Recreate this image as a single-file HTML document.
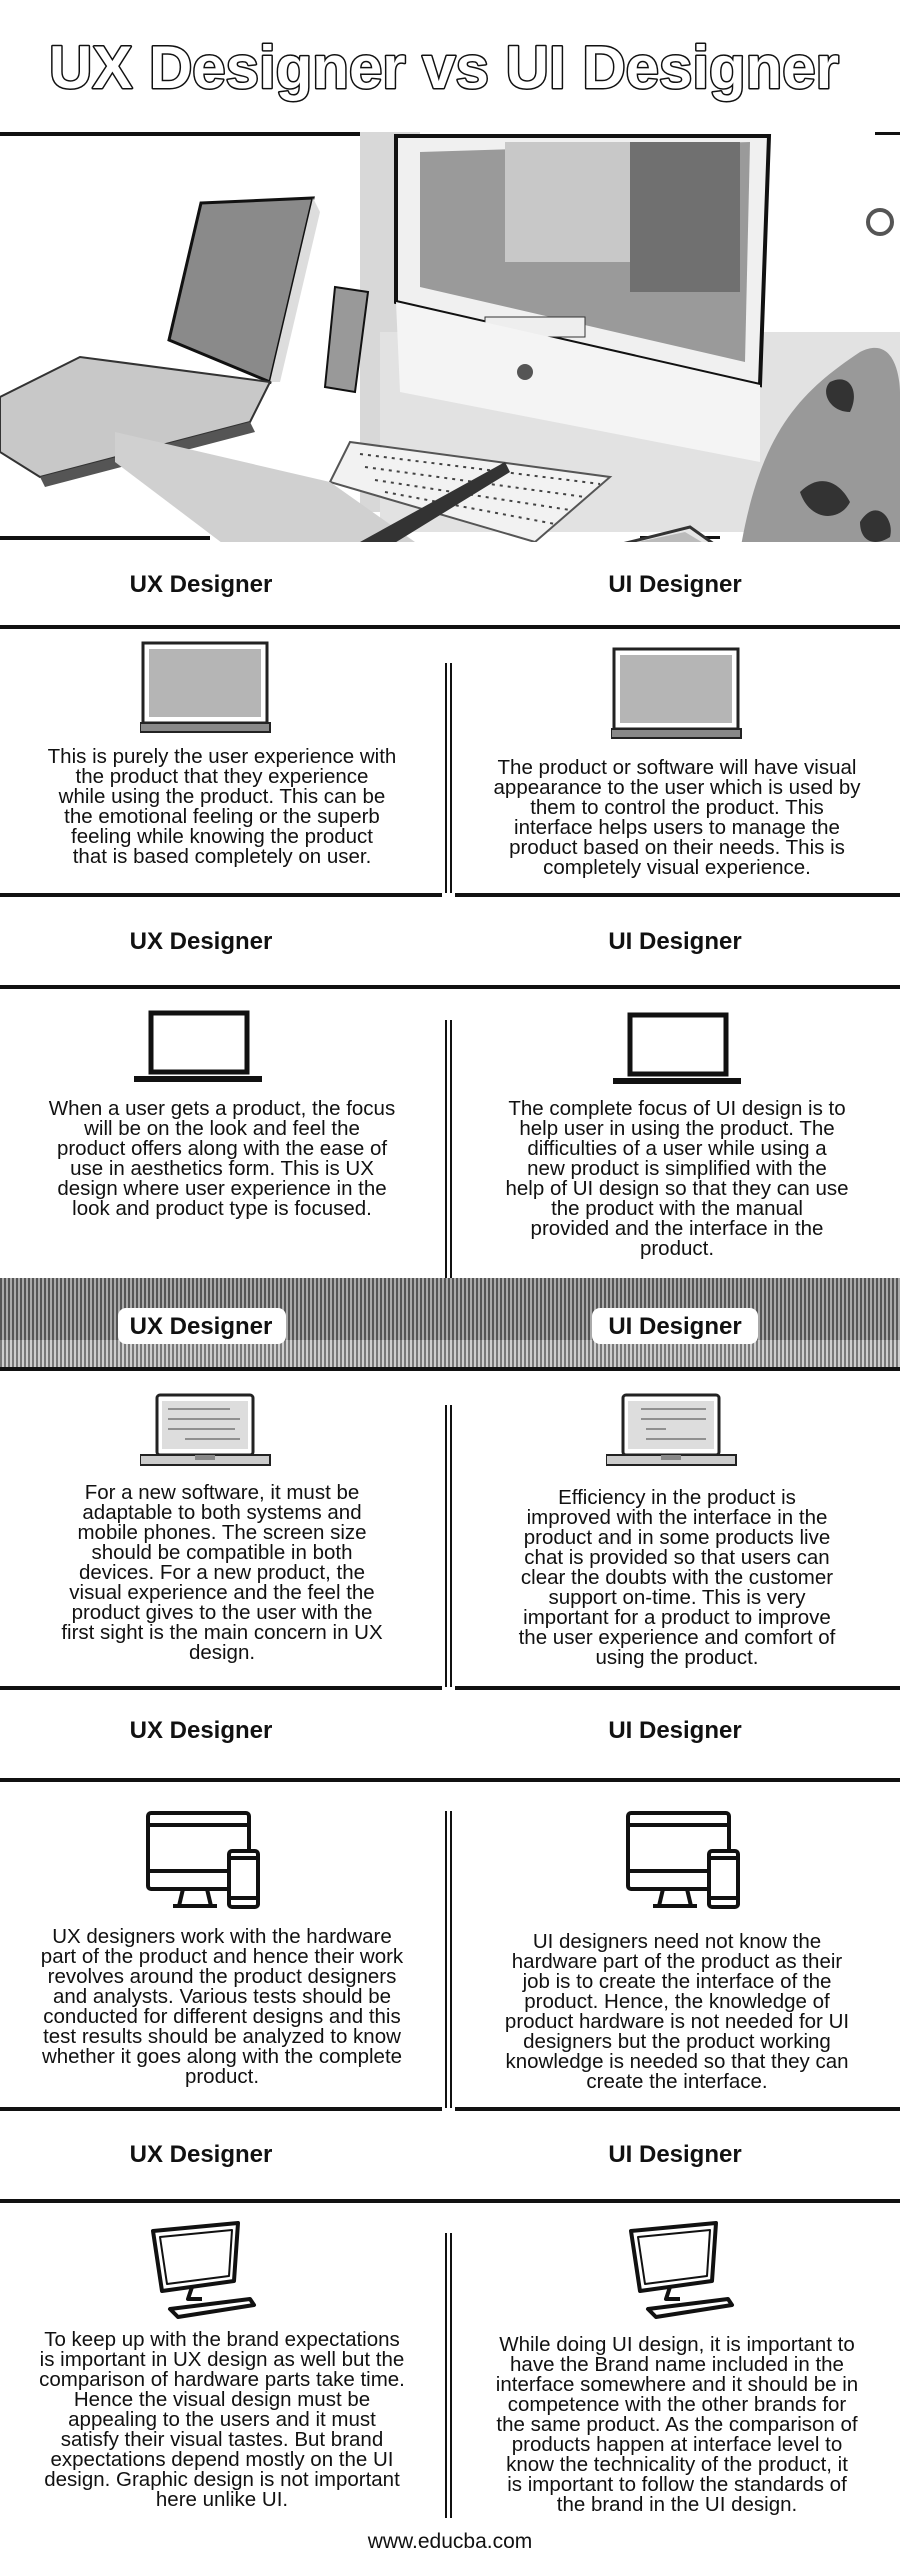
<!DOCTYPE html>
<html><head><meta charset="utf-8">
<style>
*{margin:0;padding:0;box-sizing:border-box}
body{width:900px;height:2566px;background:#fff;position:relative;overflow:hidden;font-family:"Liberation Sans",sans-serif;color:#111}
.a{position:absolute}
.hl{position:absolute;height:4px;background:#111}
.vd{position:absolute;width:7px;border-left:2px solid #111;border-right:2px solid #111}
.h{position:absolute;font-weight:bold;font-size:24px;line-height:30px;width:300px;text-align:center}
.t{position:absolute;font-size:20.5px;line-height:20px;text-align:center;white-space:nowrap}
.L{left:0;width:444px}
.R{left:454px;width:446px}
</style></head><body>

<svg class="a" style="left:0;top:30px" width="900" height="80">
<text x="49" y="58" textLength="790" lengthAdjust="spacingAndGlyphs" font-family="Liberation Sans" font-weight="bold" font-size="60" fill="#fff" stroke="#111" stroke-width="3" paint-order="stroke" stroke-linejoin="round">UX Designer vs UI Designer</text>
</svg>

<!-- photo -->
<svg class="a" style="left:0;top:132px" width="900" height="410">
<rect x="0" y="0" width="400" height="4" fill="#111"/>
<rect x="875" y="0" width="25" height="3" fill="#111"/>
<rect x="0" y="404" width="210" height="4" fill="#111"/>
<rect x="640" y="404" width="80" height="3" fill="#111"/>
<rect x="360" y="0" width="60" height="380" fill="#d8d8d8"/>
<rect x="380" y="200" width="520" height="200" fill="#e2e2e2"/>
<polygon points="396,4 769,4 760,253 396,170" fill="#f0f0f0" stroke="#111" stroke-width="4"/>
<polygon points="420,20 750,10 745,230 420,155" fill="#9a9a9a"/>
<rect x="505" y="10" width="130" height="120" fill="#c8c8c8"/>
<rect x="630" y="10" width="110" height="150" fill="#707070"/>
<rect x="485" y="185" width="100" height="20" fill="#eee" stroke="#333"/>
<polygon points="396,170 760,253 760,330 400,260" fill="#f4f4f4"/>
<circle cx="525" cy="240" r="8" fill="#555"/>
<polygon points="201,71 313,66 270,250 169,208" fill="#8a8a8a" stroke="#111" stroke-width="3"/>
<polygon points="313,66 320,80 280,250 270,250" fill="#ddd"/>
<polygon points="0,265 80,225 270,250 250,290 40,345 0,320" fill="#c8c8c8" stroke="#333" stroke-width="2"/>
<polygon points="40,345 250,290 255,300 45,355" fill="#555"/>
<polygon points="335,155 368,160 355,260 325,255" fill="#999" stroke="#111" stroke-width="2"/>
<polygon points="350,310 610,345 535,410 330,350" fill="#f2f2f2" stroke="#555" stroke-width="2"/>
<g stroke="#444" stroke-width="2" stroke-dasharray="3 5">
<line x1="360" y1="322" x2="600" y2="352"/><line x1="365" y1="335" x2="585" y2="365"/><line x1="375" y1="348" x2="570" y2="378"/><line x1="385" y1="360" x2="555" y2="392"/></g>
<polygon points="115,300 330,350 500,470 300,470 115,330" fill="#d0d0d0"/>
<polygon points="360,410 505,330 510,340 380,420" fill="#333"/>
<polygon points="590,420 690,395 725,420 640,450" fill="#e6e6e6" stroke="#333" stroke-width="3"/>
<polygon points="600,418 685,400 715,418 640,442" fill="#bbb"/>
<path d="M740,420 C760,300 800,260 860,220 C900,200 900,260 900,260 L900,410 L800,410 Z" fill="#999"/>
<path d="M800,360 c20,-20 40,-10 50,10 c-10,20 -40,20 -50,-10z M830,250 c20,-10 30,10 20,30 c-20,0 -30,-20 -20,-30z M860,390 c15,-25 35,-5 30,15 c-15,10 -30,5 -30,-15z" fill="#333"/>
<circle cx="880" cy="90" r="12" fill="none" stroke="#555" stroke-width="4"/>
</svg>

<!-- Section 1 -->
<div class="h" style="left:51px;top:570px">UX Designer</div>
<div class="h" style="left:525px;top:570px">UI Designer</div>
<div class="hl" style="left:0;width:900px;top:625px"></div>

<svg class="a" style="left:140px;top:641px" width="134" height="94">
<rect x="3" y="2" width="124" height="80" fill="#fff" stroke="#222" stroke-width="3"/>
<rect x="9" y="8" width="112" height="68" fill="#b5b5b5"/>
<rect x="0" y="82" width="130" height="9" fill="#888" stroke="#222" stroke-width="2"/>
</svg>
<svg class="a" style="left:611px;top:647px" width="134" height="94">
<rect x="3" y="2" width="124" height="80" fill="#fff" stroke="#222" stroke-width="3"/>
<rect x="9" y="8" width="112" height="68" fill="#b5b5b5"/>
<rect x="0" y="82" width="130" height="9" fill="#888" stroke="#222" stroke-width="2"/>
</svg>
<div class="vd" style="left:445px;top:663px;height:230px"></div>
<div class="t L" style="top:747px">This is purely the user experience with<br>the product that they experience<br>while using the product. This can be<br>the emotional feeling or the superb<br>feeling while knowing the product<br>that is based completely on user.</div>
<div class="t R" style="top:758px">The product or software will have visual<br>appearance to the user which is used by<br>them to control the product. This<br>interface helps users to manage the<br>product based on their needs. This is<br>completely visual experience.</div>
<div class="hl" style="left:0;width:442px;top:893px"></div>
<div class="hl" style="left:455px;width:445px;top:893px"></div>

<!-- Section 2 -->
<div class="h" style="left:51px;top:927px">UX Designer</div>
<div class="h" style="left:525px;top:927px">UI Designer</div>
<div class="hl" style="left:0;width:900px;top:985px"></div>
<svg class="a" style="left:134px;top:1010px" width="132" height="74">
<rect x="17" y="3" width="96" height="59" fill="none" stroke="#111" stroke-width="5"/>
<rect x="0" y="66" width="128" height="6" fill="#111"/>
</svg>
<svg class="a" style="left:613px;top:1012px" width="132" height="74">
<rect x="17" y="3" width="96" height="59" fill="none" stroke="#111" stroke-width="5"/>
<rect x="0" y="66" width="128" height="6" fill="#111"/>
</svg>
<div class="vd" style="left:445px;top:1020px;height:258px"></div>
<div class="t L" style="top:1099px">When a user gets a product, the focus<br>will be on the look and feel the<br>product offers along with the ease of<br>use in aesthetics form. This is UX<br>design where user experience in the<br>look and product type is focused.</div>
<div class="t R" style="top:1099px">The complete focus of UI design is to<br>help user in using the product. The<br>difficulties of a user while using a<br>new product is simplified with the<br>help of UI design so that they can use<br>the product with the manual<br>provided and the interface in the<br>product.</div>

<!-- Section 3 band -->
<div class="a" style="left:0;top:1278px;width:900px;height:90px;background:repeating-linear-gradient(90deg,#555 0 2px,#aaa 2px 4px)"></div>
<div class="a" style="left:0;top:1340px;width:900px;height:28px;background:repeating-linear-gradient(90deg,#888 0 2px,#ddd 2px 4px);opacity:.7"></div>
<div class="hl" style="left:0;width:900px;top:1367px"></div>
<div class="a" style="left:118px;top:1308px;width:168px;height:36px;background:#fff;border-radius:8px"></div>
<div class="a" style="left:592px;top:1308px;width:166px;height:36px;background:#fff;border-radius:8px"></div>
<div class="h" style="left:51px;top:1312px">UX Designer</div>
<div class="h" style="left:525px;top:1312px">UI Designer</div>

<svg class="a" style="left:140px;top:1393px" width="132" height="76">
<rect x="17" y="2" width="96" height="60" rx="3" fill="#fff" stroke="#222" stroke-width="3"/>
<rect x="22" y="8" width="86" height="48" fill="#ddd"/>
<g stroke="#777" stroke-width="1.5"><line x1="28" y1="16" x2="90" y2="16"/><line x1="28" y1="26" x2="100" y2="26"/><line x1="28" y1="36" x2="95" y2="36"/><line x1="45" y1="46" x2="100" y2="46"/></g>
<rect x="0" y="62" width="130" height="10" fill="#ccc" stroke="#222" stroke-width="2"/>
<rect x="55" y="62" width="20" height="5" fill="#888"/>
</svg>
<svg class="a" style="left:606px;top:1393px" width="132" height="76">
<rect x="17" y="2" width="96" height="60" rx="3" fill="#fff" stroke="#222" stroke-width="3"/>
<rect x="22" y="8" width="86" height="48" fill="#ddd"/>
<g stroke="#777" stroke-width="1.5"><line x1="35" y1="16" x2="100" y2="16"/><line x1="35" y1="26" x2="100" y2="26"/><line x1="40" y1="36" x2="60" y2="36"/><line x1="40" y1="46" x2="100" y2="46"/></g>
<rect x="0" y="62" width="130" height="10" fill="#ccc" stroke="#222" stroke-width="2"/>
<rect x="55" y="62" width="20" height="5" fill="#888"/>
</svg>
<div class="vd" style="left:445px;top:1405px;height:282px"></div>
<div class="t L" style="top:1483px">For a new software, it must be<br>adaptable to both systems and<br>mobile phones. The screen size<br>should be compatible in both<br>devices. For a new product, the<br>visual experience and the feel the<br>product gives to the user with the<br>first sight is the main concern in UX<br>design.</div>
<div class="t R" style="top:1488px">Efficiency in the product is<br>improved with the interface in the<br>product and in some products live<br>chat is provided so that users can<br>clear the doubts with the customer<br>support on-time. This is very<br>important for a product to improve<br>the user experience and comfort of<br>using the product.</div>
<div class="hl" style="left:0;width:442px;top:1686px"></div>
<div class="hl" style="left:455px;width:445px;top:1686px"></div>

<!-- Section 4 -->
<div class="h" style="left:51px;top:1716px">UX Designer</div>
<div class="h" style="left:525px;top:1716px">UI Designer</div>
<div class="hl" style="left:0;width:900px;top:1778px"></div>
<svg class="a" style="left:145px;top:1810px" width="118" height="100">
<g fill="none" stroke="#111" stroke-width="4" stroke-linejoin="round">
<rect x="3" y="3" width="101" height="76" rx="3"/>
<line x1="3" y1="15" x2="104" y2="15"/><line x1="3" y1="61" x2="84" y2="61"/>
<path d="M38,79 L34,96 M62,79 L66,96 M28,96 L72,96"/>
<rect x="84" y="41" width="29" height="56" rx="3" fill="#fff"/>
<line x1="84" y1="48" x2="113" y2="48"/><line x1="84" y1="88" x2="113" y2="88"/>
</g></svg>
<svg class="a" style="left:625px;top:1810px" width="118" height="100">
<g fill="none" stroke="#111" stroke-width="4" stroke-linejoin="round">
<rect x="3" y="3" width="101" height="76" rx="3"/>
<line x1="3" y1="15" x2="104" y2="15"/><line x1="3" y1="61" x2="84" y2="61"/>
<path d="M38,79 L34,96 M62,79 L66,96 M28,96 L72,96"/>
<rect x="84" y="41" width="29" height="56" rx="3" fill="#fff"/>
<line x1="84" y1="48" x2="113" y2="48"/><line x1="84" y1="88" x2="113" y2="88"/>
</g></svg>
<div class="vd" style="left:445px;top:1811px;height:297px"></div>
<div class="t L" style="top:1927px">UX designers work with the hardware<br>part of the product and hence their work<br>revolves around the product designers<br>and analysts. Various tests should be<br>conducted for different designs and this<br>test results should be analyzed to know<br>whether it goes along with the complete<br>product.</div>
<div class="t R" style="top:1932px">UI designers need not know the<br>hardware part of the product as their<br>job is to create the interface of the<br>product. Hence, the knowledge of<br>product hardware is not needed for UI<br>designers but the product working<br>knowledge is needed so that they can<br>create the interface.</div>
<div class="hl" style="left:0;width:442px;top:2107px"></div>
<div class="hl" style="left:455px;width:445px;top:2107px"></div>

<!-- Section 5 -->
<div class="h" style="left:51px;top:2140px">UX Designer</div>
<div class="h" style="left:525px;top:2140px">UI Designer</div>
<div class="hl" style="left:0;width:900px;top:2199px"></div>
<svg class="a" style="left:150px;top:2221px" width="110" height="100">
<g fill="none" stroke="#111" stroke-width="4" stroke-linejoin="round">
<polygon points="3,10 88,2 84,60 12,70"/>
<polygon points="10,16 82,9 79,55 17,63" stroke-width="2"/>
<path d="M42,66 L38,78 L52,78"/>
<polygon points="20,88 100,78 104,84 28,96"/>
</g></svg>
<svg class="a" style="left:628px;top:2221px" width="110" height="100">
<g fill="none" stroke="#111" stroke-width="4" stroke-linejoin="round">
<polygon points="3,10 88,2 84,60 12,70"/>
<polygon points="10,16 82,9 79,55 17,63" stroke-width="2"/>
<path d="M42,66 L38,78 L52,78"/>
<polygon points="20,88 100,78 104,84 28,96"/>
</g></svg>
<div class="vd" style="left:445px;top:2233px;height:285px"></div>
<div class="t L" style="top:2330px">To keep up with the brand expectations<br>is important in UX design as well but the<br>comparison of hardware parts take time.<br>Hence the visual design must be<br>appealing to the users and it must<br>satisfy their visual tastes. But brand<br>expectations depend mostly on the UI<br>design. Graphic design is not important<br>here unlike UI.</div>
<div class="t R" style="top:2335px">While doing UI design, it is important to<br>have the Brand name included in the<br>interface somewhere and it should be in<br>competence with the other brands for<br>the same product. As the comparison of<br>products happen at interface level to<br>know the technicality of the product, it<br>is important to follow the standards of<br>the brand in the UI design.</div>

<div class="a" style="left:0;width:900px;top:2529px;text-align:center;font-size:21px;line-height:26px">www.educba.com</div>
</body></html>
